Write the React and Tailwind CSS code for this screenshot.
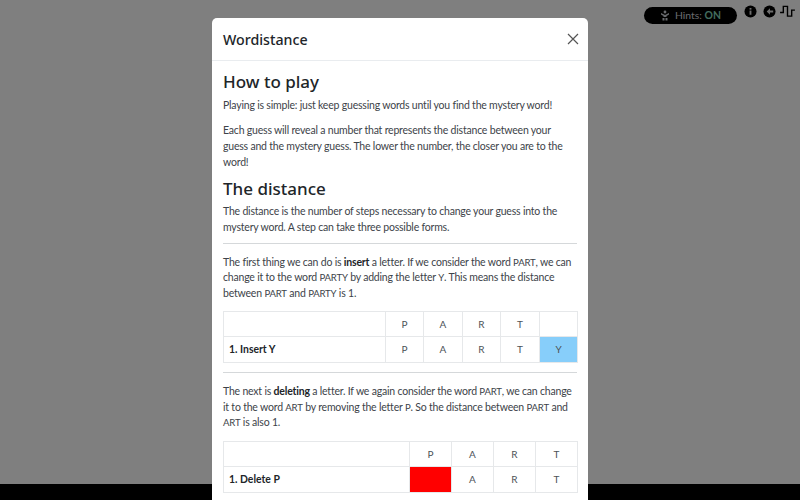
import React from "react";

const font = { fontFamily: 'Lato, "Noto Sans", sans-serif' };
const headFont = { fontFamily: '"Noto Sans", "Open Sans", sans-serif' };

function Letter({ children, className = "" }) {
  return (
    <td className={`border border-[#e6e8ea] text-center align-middle text-[10px] text-[#4d5358] p-0 ${className}`}>
      {children}
    </td>
  );
}

function DemoTable({ head, label, row, cols, first }) {
  return (
    <table className="border-collapse table-fixed w-[354px]">
      <colgroup>
        <col className={first} />
        {cols.map((c, i) => (
          <col key={i} className={c} />
        ))}
      </colgroup>
      <tbody>
        <tr className="h-[25.5px]">
          <td className="border border-[#e6e8ea]" />
          {head.map((h, i) => (
            <Letter key={i}>{h}</Letter>
          ))}
        </tr>
        <tr className="h-[25.5px]">
          <td className="border border-[#e6e8ea] pl-[5px] text-[10.4px] font-bold text-[#212529]">{label}</td>
          {row.map((c, i) => (
            <Letter key={i} className={c.bg || ""}>
              {c.t}
            </Letter>
          ))}
        </tr>
      </tbody>
    </table>
  );
}

const P = ({ children, className = "" }) => (
  <p className={`text-[10.5px] tracking-[-0.2px] leading-[15.7px] text-[#3d4349] ${className}`}>{children}</p>
);
const W = ({ children }) => <span className="text-[9.6px]">{children}</span>;

export default function App() {
  return (
    <div className="relative w-[800px] h-[500px] overflow-hidden flex flex-col bg-white" style={font}>
      <div className="flex items-start justify-end h-[30px] pt-[5px] pr-[5px]">
        <div className="flex items-center justify-center w-[93px] h-[17px] mt-[2px] rounded-full bg-black text-[10.4px] text-gray-300 gap-[5px] mr-[7px]">
          <svg width="10" height="11" viewBox="0 0 10 11" fill="currentColor">
            <circle cx="5" cy="2" r="1.4" />
            <path d="M1 3l4 2 4-2v1.500L6.500 6v1h-3V6L1 4.500z" />
            <path d="M2.500 8h2v2.500h-2zM5.500 8h2v2.500h-2z" />
          </svg>
          <span>
            Hints: <b className="text-[#86d9bd] font-bold">ON</b>
          </span>
        </div>
        <svg width="13" height="13" viewBox="0 0 14 14" className="mr-[6px]">
          <circle cx="7" cy="7" r="6.500" fill="#000" />
          <rect x="6" y="6" width="2" height="4.500" fill="#ddd" />
          <rect x="6" y="3.200" width="2" height="1.800" fill="#ddd" />
        </svg>
        <svg width="13" height="13" viewBox="0 0 14 14" className="mr-[4px]">
          <circle cx="7" cy="7" r="6.500" fill="#000" />
          <path d="M7.500 3.500L4 7l3.500 3.500V8.200H11V5.800H7.500z" fill="#ddd" />
        </svg>
        <svg width="15" height="13" viewBox="0 0 16 14" fill="none" stroke="#000" strokeWidth="1.500">
          <path d="M0 8h3.500V1.500h4.500v10.500h4.500V5.500H16" />
        </svg>
      </div>
      <div className="flex-1" />
      <div className="h-[16px] bg-black" />

      <div className="absolute inset-0 bg-black/50" />

      <div className="absolute left-[212px] top-[18px] w-[376px] h-[500px] bg-white rounded-[5px] flex flex-col">
        <div className="flex items-center justify-between h-[43px] pt-[1px] pl-[11px] pr-[9px] border-b border-[#e9ecef] shrink-0">
          <h5 className="text-[14.2px] font-medium text-[#212529]" style={headFont}>Wordistance</h5>
          <svg width="12" height="12" viewBox="0 0 12 12" stroke="#555" strokeWidth="1.200" className="-mt-[2px]">
            <path d="M1 1l10 10M11 1L1 11" />
          </svg>
        </div>
        <div className="px-[11px] pt-[9px]">
          <h2 className="text-[17px] leading-[24px] font-medium text-[#212529] mb-[4px]" style={headFont}>How to play</h2>
          <P className="mb-[9.5px]">Playing is simple: just keep guessing words until you find the mystery word!</P>
          <P>
            Each guess will reveal a number that represents the distance between your guess and the mystery guess.
            The lower the number, the closer you are to the word!
          </P>
          <h2 className="text-[17px] leading-[24px] font-medium text-[#212529] mt-[7px] mb-[3px]" style={headFont}>The distance</h2>
          <P>
            The distance is the number of steps necessary to change your guess into the mystery word. A step can take
            three possible forms.
          </P>
          <hr className="border-[#d5d8da] mt-[7px] mb-[11px]" />
          <P className="mb-[9px]">
            The first thing we can do is <b className="text-[#212529]">insert</b> a letter. If we consider the word{" "}
            <W>PART</W>, we can change it to the word <W>PARTY</W> by adding the letter <W>Y</W>. This means the
            distance between <W>PART</W> and <W>PARTY</W> is 1.
          </P>
          <DemoTable
            first="w-[162px]"
            cols={["w-[38px]", "w-[39px]", "w-[38px]", "w-[39px]", "w-[38px]"]}
            head={["P", "A", "R", "T", ""]}
            label="1. Insert Y"
            row={[{ t: "P" }, { t: "A" }, { t: "R" }, { t: "T" }, { t: "Y", bg: "bg-[#87cefa]" }]}
          />
          <hr className="border-[#d5d8da] mt-[9px] mb-[11px]" />
          <P className="mb-[10px]">
            The next is <b className="text-[#212529]">deleting</b> a letter. If we again consider the word <W>PART</W>,
            we can change it to the word <W>ART</W> by removing the letter <W>P</W>. So the distance between <W>PART</W>{" "}
            and <W>ART</W> is also 1.
          </P>
          <DemoTable
            first="w-[186px]"
            cols={["w-[42px]", "w-[42px]", "w-[42px]", "w-[42px]"]}
            head={["P", "A", "R", "T"]}
            label="1. Delete P"
            row={[{ t: "", bg: "bg-[#ff0000]" }, { t: "A" }, { t: "R" }, { t: "T" }]}
          />
        </div>
      </div>
    </div>
  );
}
